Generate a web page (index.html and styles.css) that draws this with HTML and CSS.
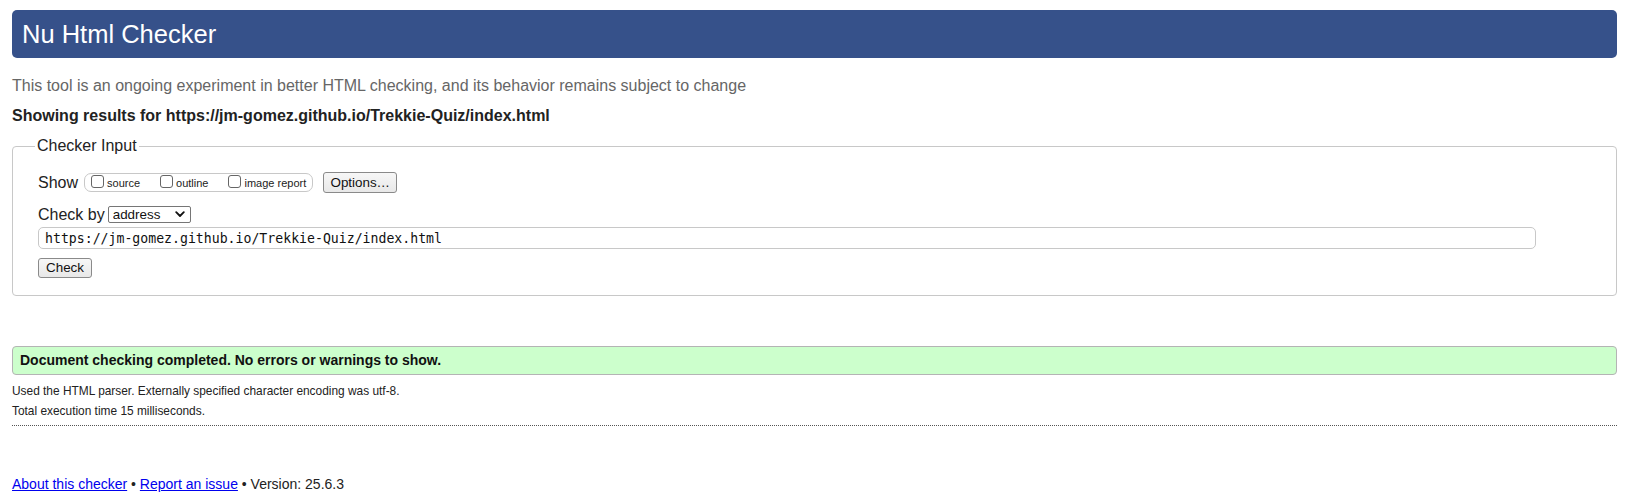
FILE: index.html
```html
<!DOCTYPE html>
<html lang="en">
<head>
<meta charset="utf-8">
<title>Nu Html Checker</title>
<link rel="stylesheet" href="styles.css">
</head>
<body>
<h1 class="title">Nu Html Checker</h1>
<p class="intro">This tool is an ongoing experiment in better HTML checking, and its behavior remains subject to change</p>
<p class="showing">Showing results for https://jm-gomez.github.io/Trekkie-Quiz/index.html</p>
<form class="form">
  <fieldset class="checker">
    <legend class="legend">Checker Input</legend>
    <div class="row show-row">
      <span class="label">Show</span>
      <fieldset class="pill">
        <label class="opt"><input type="checkbox" class="cb"><span>source</span></label>
        <label class="opt"><input type="checkbox" class="cb"><span>outline</span></label>
        <label class="opt"><input type="checkbox" class="cb"><span>image report</span></label>
      </fieldset>
      <button type="button" class="btn btn-options">Options…</button>
    </div>
    <div class="row checkby-row">
      <span class="label">Check by</span>
      <span class="select-wrap">
        <select class="select"><option>address</option></select>
        <svg class="chev" width="10" height="7" viewBox="0 0 10 7"><path d="M1.2 1.2 L5 5 L8.8 1.2" fill="none" stroke="#111" stroke-width="1.8" stroke-linecap="round" stroke-linejoin="round"/></svg>
      </span>
    </div>
    <input class="url" type="text" value="https://jm-gomez.github.io/Trekkie-Quiz/index.html">
    <div class="row">
      <button type="button" class="btn btn-check">Check</button>
    </div>
  </fieldset>
</form>
<div class="results">
  <p class="success">Document checking completed. No errors or warnings to show.</p>
  <p class="details">Used the HTML parser. Externally specified character encoding was utf-8.</p>
  <p class="details">Total execution time 15 milliseconds.</p>
</div>
<p class="footer"><a href="#">About this checker</a> • <a href="#">Report an issue</a> • Version: 25.6.3</p>
</body>
</html>
```
FILE: styles.css
```css
html, body {
  background: #fff;
}
body {
  margin: 0;
  padding: 10px 18px 0 12px;
  font-family: "Liberation Sans", Arial, Helvetica, sans-serif;
  color: #222;
}
.title {
  margin: 0;
  height: 48px;
  box-sizing: border-box;
  padding: 10px 10px;
  background: #36518a;
  color: #fff;
  font-size: 25.5px;
  font-weight: normal;
  line-height: 28px;
  border-radius: 5px;
}
.intro {
  margin: 19px 0 0;
  font-size: 16px;
  line-height: 18px;
  color: #666;
}
.showing {
  margin: 12px 0 0;
  font-size: 16px;
  line-height: 18px;
  font-weight: bold;
  color: #222;
}
.form {
  margin: 12px 0 0;
}
.checker {
  margin: 0;
  border: 1px solid #c8c8c8;
  border-radius: 4px;
  padding: 17px 25px 17px 25px;
  color: #222;
}
.legend {
  margin-left: -3px;
  padding: 0 2px;
  font-size: 16px;
  line-height: 18px;
}
.row {
  display: flex;
  align-items: center;
}
.label {
  font-size: 16px;
  line-height: 18px;
}
.show-row {
  height: 21px;
}
.pill {
  display: flex;
  align-items: center;
  margin: 0 0 0 6px;
  padding: 0 6px;
  height: 19px;
  box-sizing: border-box;
  border: 1px solid #c8c8c8;
  border-radius: 7px;
}
.opt {
  display: flex;
  align-items: center;
  font-size: 11px;
  color: #222;
  margin-right: 20px;
}
.opt:last-child {
  margin-right: 0;
}
.cb {
  appearance: none;
  -webkit-appearance: none;
  width: 13px;
  height: 13px;
  margin: 0 3px 0 0;
  border: 1px solid #666;
  border-radius: 3px;
  background: #fff;
  position: relative;
  top: -1px;
}
.btn {
  appearance: none;
  -webkit-appearance: none;
  font-family: "Liberation Sans", Arial, sans-serif;
  font-size: 13.4px;
  color: #111;
  background: linear-gradient(#f7f7f7, #e8e8e8);
  border: 1px solid #8a8a8a;
  border-radius: 3px;
  padding: 0;
  height: 21px;
  line-height: 19px;
}
.btn-options {
  margin-left: 10px;
  width: 74px;
}
.checkby-row {
  margin-top: 13px;
  height: 17px;
}
.select-wrap {
  position: relative;
  display: inline-block;
  margin-left: 3px;
}
.select {
  appearance: none;
  -webkit-appearance: none;
  width: 83px;
  height: 17px;
  box-sizing: border-box;
  border: 1px solid #767676;
  border-radius: 2px;
  background: #fff;
  font-family: "Liberation Sans", Arial, sans-serif;
  font-size: 13.4px;
  color: #111;
  padding: 0 0 0 4px;
  line-height: 15px;
  display: block;
}
.chev {
  position: absolute;
  right: 6px;
  top: 5px;
  pointer-events: none;
}
.url {
  display: block;
  margin: 4px 0 0 0;
  width: 1498px;
  height: 22px;
  box-sizing: border-box;
  border: 1px solid #c8c8c8;
  border-radius: 5px;
  padding: 0 6px;
  font-family: "DejaVu Sans Mono", "Liberation Mono", monospace;
  font-size: 13.2px;
  color: #111;
  background: #fff;
}
.btn-check {
  margin-top: 9px;
  width: 54px;
  height: 20px;
  line-height: 18px;
}
.results {
  margin-top: 50px;
  border-bottom: 1px dotted #555;
  padding-bottom: 7px;
}
.success {
  margin: 0;
  height: 29px;
  box-sizing: border-box;
  background: #ccffcc;
  border: 1px solid #b4b4b4;
  border-radius: 4px;
  padding: 0 7px;
  font-size: 14px;
  font-weight: bold;
  line-height: 27px;
  color: #111;
}
.details {
  margin: 9px 0 0;
  font-size: 11.9px;
  line-height: 14px;
  color: #222;
}
.details + .details {
  margin-top: 6px;
}
.footer {
  margin: 50px 0 0;
  font-size: 14px;
  line-height: 16px;
  color: #222;
}
.footer a {
  color: #00e;
}
```
